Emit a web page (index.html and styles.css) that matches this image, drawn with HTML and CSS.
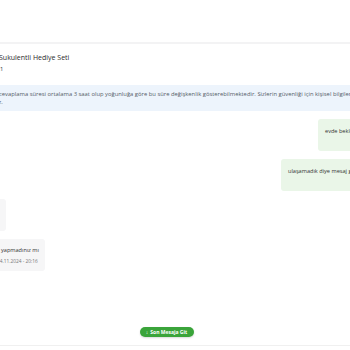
FILE: index.html
```html
<!DOCTYPE html>
<html lang="tr">
<head>
<meta charset="utf-8">
<link rel="stylesheet" href="styles.css">
</head>
<body>
<div class="page">
  <div class="topbar"></div>
  <div class="product">
    <div class="product-title">Sukulentli Hediye Seti</div>
    <div class="product-qty">x1</div>
  </div>
  <div class="notice">
    <p>cevaplama süresi ortalama 3 saat olup yoğunluğa göre bu süre değişkenlik gösterebilmektedir. Sizlerin güvenliği için kişisel bilgilerinizi paylaşmayınız.</p>
    <p class="cut">iz.</p>
  </div>
  <div class="chat">
    <div class="row out">
      <div class="bubble green b1">evde bekledim kimse gelmedi</div>
    </div>
    <div class="row out">
      <div class="bubble green b2">ulaşamadık diye mesaj geldi neden böyle</div>
    </div>
    <div class="row in">
      <div class="bubble grey b3"></div>
    </div>
    <div class="row in">
      <div class="bubble grey b4">
        <div class="msg">yapmadınız mı</div>
        <div class="time">14.11.2024 - 20:16</div>
      </div>
    </div>
  </div>
  <div class="jump-wrap">
    <button class="jump"><span class="arrow">↓</span> Son Mesaja Git</button>
  </div>
  <div class="bottom"></div>
</div>
</body>
</html>
```
FILE: styles.css
```css
html, body {
  margin: 0;
  padding: 0;
  background: #ffffff;
  overflow: hidden;
}
body {
  font-family: "Open Sans", "Noto Sans", sans-serif;
  color: #333;
  width: 350px;
  height: 350px;
}
.page {
  width: 350px;
  height: 350px;
  display: flex;
  flex-direction: column;
  position: relative;
}
.topbar {
  height: 42px;
  border-bottom: 2px solid #f3f3f4;
  flex: none;
}
.product {
  padding: 8px 0 0 0;
  height: 33px;
  flex: none;
}
.product-title {
  font-size: 7px;
  line-height: 11px;
  color: #2b2b2b;
  font-weight: 500;
  margin-left: -1px;
}
.product-qty {
  font-size: 5.8px;
  line-height: 12px;
  color: #333;
  margin-left: -3px;
}
.notice {
  background: #edf4fc;
  height: 26px;
  padding-top: 5px;
  box-sizing: border-box;
  flex: none;
  overflow: hidden;
}
.notice p {
  margin: 0;
  font-size: 5.85px;
  line-height: 8px;
  color: #555d68;
  white-space: nowrap;
  margin-left: -1px;
}
.notice .cut {
  margin-left: -3px;
}
.chat {
  display: flex;
  flex-direction: column;
  gap: 8px;
  padding-top: 8px;
  width: 470px;
  margin-left: -60px;
  flex: none;
}
.row {
  display: flex;
}
.row.out {
  justify-content: flex-end;
}
.row.in {
  justify-content: flex-start;
}
.bubble {
  height: 32px;
  box-sizing: border-box;
  border-radius: 3px;
  font-size: 5.6px;
  color: #333;
  white-space: nowrap;
  overflow: hidden;
}
.green {
  background: #eaf6e8;
  padding: 8px 7px;
}
.grey {
  background: #f6f6f7;
}
.b1 { width: 92px; }
.b2 { width: 129px; }
.b3 { width: 66px; }
.b4 {
  width: 105px;
  padding: 7px 0 0 61px;
}
.msg {
  font-size: 5.6px;
  line-height: 8px;
  color: #333;
}
.time {
  margin-top: 4px;
  font-size: 4.8px;
  line-height: 6px;
  color: #777;
  margin-left: -4px;
}
.jump-wrap {
  flex: 1;
  display: flex;
  justify-content: center;
  align-items: flex-end;
  padding-bottom: 8px;
}
.jump {
  border: none;
  background: #3aa43a;
  color: #fff;
  font-family: "Open Sans", sans-serif;
  font-size: 5px;
  font-weight: 700;
  height: 10px;
  width: 54px;
  border-radius: 6px;
  padding: 0;
  margin-left: -17px;
  display: flex;
  align-items: center;
  justify-content: center;
  gap: 2px;
  box-shadow: 0 1px 2px rgba(0,0,0,0.15);
}
.arrow {
  font-size: 5px;
}
.bottom {
  height: 4px;
  border-top: 1px solid #f0f0f0;
  flex: none;
}
```
